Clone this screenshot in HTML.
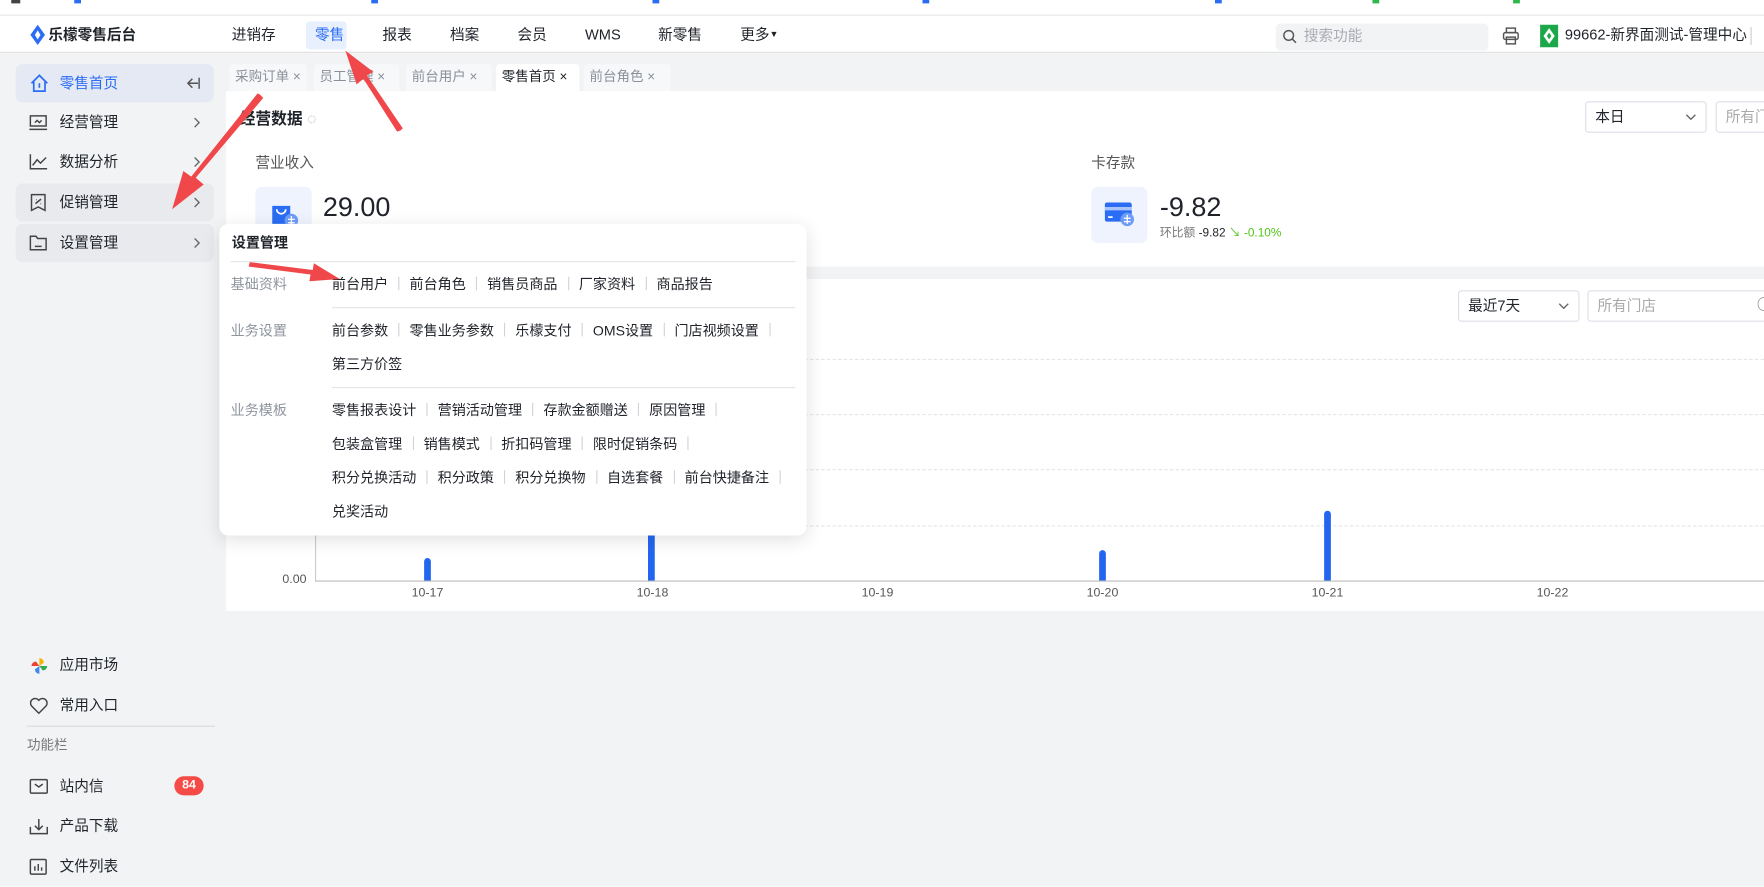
<!DOCTYPE html>
<html><head><meta charset="utf-8"><style>
*{box-sizing:border-box;margin:0;padding:0}
html,body{width:1764px;height:886px;overflow:hidden;background:#fff}
body{font-family:"Liberation Sans","Noto Sans CJK SC",sans-serif;color:#1f2329;line-height:1.15}
#root{position:absolute;left:0;top:0;width:1568px;height:788px;transform:scale(1.125);transform-origin:0 0;background:#f2f3f5;font-size:13px}
.a{position:absolute;white-space:nowrap}
.hdr{position:absolute;left:0;top:13px;width:1568px;height:34px;background:#fff;border-top:1px solid #e6e6e6;border-bottom:1px solid #e0e0e0}
.nav{position:absolute;top:10px;font-size:13px;color:#1f2329}
.side{position:absolute;left:14px;width:176px;height:34px;border-radius:6px}
.side .t{position:absolute;left:39px;top:10px;font-size:13px}
.side .ar{position:absolute;right:12px;top:12px}
.tab{position:absolute;top:57px;height:24px;background:#f7f8fa;color:#8a8f99;font-size:12px;padding:5px 5px;border-radius:3px 3px 0 0}
.card{position:absolute;background:#fff}
.pop .lb{position:absolute;left:10px;color:#8f959e;font-size:12.5px}
.pop .it{position:absolute;font-size:12.5px;color:#1f2329}
.sep{display:inline-block;width:1px;height:12px;background:#d0d3d8;margin:0 9px;vertical-align:-1px}
.grid{position:absolute;left:280px;width:1288px;border-top:1px dashed #e3e5e8}
.bar{position:absolute;width:6px;background:#2266f0;border-radius:3px 3px 0 0}
.xl{position:absolute;top:521px;font-size:11px;color:#555;transform:translateX(-50%)}
</style></head><body><div id="root">
<div class="a" style="left:0;top:0;width:1568px;height:13px;background:#fff"></div>
<div class="a" style="left:10px;top:0;width:8px;height:3px;background:#444"></div>
<div class="a" style="left:66px;top:0;width:6px;height:3px;background:#2a6df4"></div>
<div class="a" style="left:330px;top:0;width:6px;height:3px;background:#2a6df4"></div>
<div class="a" style="left:580px;top:0;width:6px;height:3px;background:#2a6df4"></div>
<div class="a" style="left:820px;top:0;width:6px;height:3px;background:#2a6df4"></div>
<div class="a" style="left:1080px;top:0;width:6px;height:3px;background:#2a6df4"></div>
<div class="a" style="left:1220px;top:0;width:6px;height:3px;background:#2fb84a"></div>
<div class="a" style="left:1345px;top:0;width:6px;height:3px;background:#2fb84a"></div>
<div class="hdr">
 <svg class="a" style="left:27px;top:8px" width="13" height="18" viewBox="0 0 13 18"><path d="M6.5 0 L13 9 L6.5 18 L0 9Z" fill="#2a6df4"/><path d="M6.5 5 L9 9 L6.5 13 L4 9Z" fill="#fff"/></svg>
 <div class="a" style="left:43px;top:10px;font-weight:bold;font-size:13px">乐檬零售后台</div>
 <div class="nav" style="left:206px">进销存</div>
 <div class="a" style="left:272px;top:5px;width:36px;height:25px;background:#e8effd;border-radius:3px"></div>
 <div class="nav" style="left:280px;color:#2a6df4">零售</div>
 <div class="nav" style="left:340px">报表</div>
 <div class="nav" style="left:400px">档案</div>
 <div class="nav" style="left:460px">会员</div>
 <div class="nav" style="left:520px">WMS</div>
 <div class="nav" style="left:585px">新零售</div>
 <div class="nav" style="left:658px">更多<span style="font-size:8px;vertical-align:2px">▼</span></div>
 <div class="a" style="left:1134px;top:7px;width:189px;height:24px;background:#f2f3f5;border-radius:4px"></div>
 <svg class="a" style="left:1140px;top:12px" width="13" height="13" viewBox="0 0 13 13"><circle cx="5.5" cy="5.5" r="4.3" fill="none" stroke="#555" stroke-width="1.3"/><path d="M8.6 8.6L12 12" stroke="#555" stroke-width="1.3"/></svg>
 <div class="a" style="left:1159px;top:11px;color:#a8abb2;font-size:13px">搜索功能</div>
 <svg class="a" style="left:1335px;top:10px" width="16" height="16" viewBox="0 0 16 16" fill="none" stroke="#555" stroke-width="1.3"><rect x="4" y="1" width="8" height="4"/><rect x="1.5" y="5" width="13" height="6" rx="1.5"/><rect x="4" y="9" width="8" height="6"/></svg>
 <div class="a" style="left:1369px;top:8px;width:16px;height:20px;background:#1aa84b"></div>
 <svg class="a" style="left:1372px;top:11px" width="10" height="14" viewBox="0 0 10 14"><path d="M5 0L10 7L5 14L0 7Z" fill="#fff"/><path d="M5 4L7 7L5 10L3 7Z" fill="#1aa84b"/></svg>
 <div class="a" style="left:1391px;top:10px;font-size:13px">99662-新界面测试-管理中心</div>
 <div class="a" style="left:1556px;top:10px;width:1px;height:16px;background:#ccc"></div>
</div>
<div class="side" style="top:57px;background:#e4e9f3"><svg class="a" style="left:12px;top:8px" width="18" height="18" viewBox="0 0 18 18" fill="none" stroke="#2a6df4" stroke-width="1.5"><path d="M2 9L9 2L16 9M4 7.5V16H14V7.5"/><path d="M9 9v4"/></svg><div class="t" style="color:#2a6df4">零售首页</div><svg class="a" style="right:12px;top:12px" width="12" height="10" viewBox="0 0 12 10" fill="none" stroke="#555" stroke-width="1.3"><path d="M11 0v10M10 5H1M5 1L1 5l4 4"/></svg></div>
<div class="side" style="top:92px"><svg class="a" style="left:12px;top:10px" width="16" height="14" viewBox="0 0 16 14" fill="none" stroke="#444" stroke-width="1.3"><rect x="1" y="1" width="14" height="9"/><path d="M0 13h16M5 7l2-2 2 2 2-2"/></svg><div class="t">经营管理</div><svg class="ar" width="6" height="10"><path d="M1 1l4 4-4 4" fill="none" stroke="#666" stroke-width="1.2"/></svg></div>
<div class="side" style="top:127px"><svg class="a" style="left:12px;top:10px" width="16" height="14" viewBox="0 0 16 14" fill="none" stroke="#444" stroke-width="1.3"><path d="M1 0v13h15M3 10l4-5 3 3 5-5"/></svg><div class="t">数据分析</div><svg class="ar" width="6" height="10"><path d="M1 1l4 4-4 4" fill="none" stroke="#666" stroke-width="1.2"/></svg></div>
<div class="side" style="top:163px;background:#e9eaed"><svg class="a" style="left:13px;top:9px" width="14" height="16" viewBox="0 0 14 16" fill="none" stroke="#444" stroke-width="1.3"><path d="M1 1h12v14l-6-3-6 3z"/><path d="M4.5 9l5-4M5 5.5h.5M9 9h.5"/></svg><div class="t">促销管理</div><svg class="ar" width="6" height="10"><path d="M1 1l4 4-4 4" fill="none" stroke="#666" stroke-width="1.2"/></svg></div>
<div class="side" style="top:199px;background:#e9eaed"><svg class="a" style="left:12px;top:10px" width="16" height="14" viewBox="0 0 16 14" fill="none" stroke="#444" stroke-width="1.3"><path d="M1 1h5l1.5 2H15v10H1z"/><path d="M5 10h6"/></svg><div class="t">设置管理</div><svg class="ar" width="6" height="10"><path d="M1 1l4 4-4 4" fill="none" stroke="#666" stroke-width="1.2"/></svg></div>
<svg class="a" style="left:27px;top:584px" width="16" height="16" viewBox="0 0 16 16"><path d="M8 8V1a4 4 0 0 1 4 4z" fill="#f4b400"/><path d="M8 8h7a4 4 0 0 1-4 4z" fill="#34a853"/><path d="M8 8v7a4 4 0 0 1-4-4z" fill="#4285f4"/><path d="M8 8H1a4 4 0 0 1 4-4z" fill="#ea4335"/></svg>
<div class="a" style="left:53px;top:584px">应用市场</div>
<svg class="a" style="left:26px;top:620px" width="17" height="15" viewBox="0 0 17 15"><path d="M8.5 14L2 7.5A3.6 3.6 0 0 1 8.5 2.5 3.6 3.6 0 0 1 15 7.5Z" fill="none" stroke="#444" stroke-width="1.3"/></svg>
<div class="a" style="left:53px;top:620px">常用入口</div>
<div class="a" style="left:24px;top:645px;width:167px;height:1px;background:#d8dadd"></div>
<div class="a" style="left:24px;top:656px;color:#777;font-size:12px">功能栏</div>
<svg class="a" style="left:26px;top:692px" width="17" height="14" viewBox="0 0 17 14" fill="none" stroke="#444" stroke-width="1.3"><rect x="1" y="1" width="15" height="12" rx="1"/><path d="M5 5l3.5 2.5L12 5"/></svg>
<div class="a" style="left:53px;top:692px">站内信</div>
<div class="a" style="left:155px;top:690px;width:26px;height:17px;border-radius:9px;background:#f54a45;color:#fff;font-size:11px;font-weight:bold;text-align:center;line-height:17px">84</div>
<svg class="a" style="left:26px;top:727px" width="17" height="15" viewBox="0 0 17 15" fill="none" stroke="#444" stroke-width="1.3"><path d="M1 8v6h15V8M8.5 1v9M5 7l3.5 3.5L12 7"/></svg>
<div class="a" style="left:53px;top:727px">产品下载</div>
<svg class="a" style="left:26px;top:763px" width="16" height="15" viewBox="0 0 16 15" fill="none" stroke="#444" stroke-width="1.3"><rect x="1" y="1" width="14" height="13" rx="1"/><path d="M5 11V7M8 11V5M11 11V8"/></svg>
<div class="a" style="left:53px;top:763px">文件列表</div>
<div class="tab" style="left:204px;width:69px">采购订单 ×</div>
<div class="tab" style="left:279px;width:76px">员工管理 ×</div>
<div class="tab" style="left:361px;width:76px">前台用户 ×</div>
<div class="tab" style="left:441px;width:74px;background:#fff;color:#1f2329">零售首页 ×</div>
<div class="tab" style="left:519px;width:77px">前台角色 ×</div>
<div class="card" style="left:201px;top:81px;width:1367px;height:156px"></div>
<div class="a" style="left:213px;top:97px;font-size:14px;font-weight:bold">经营数据 <span style="color:#aaa;font-weight:normal">◌</span></div>
<div class="a" style="left:1409px;top:90px;width:108px;height:28px;border:1px solid #dcdfe6;border-radius:3px;background:#fff"><span class="a" style="left:8px;top:6px">本日</span><svg class="a" style="left:88px;top:10px" width="10" height="7"><path d="M1 1l4 4 4-4" fill="none" stroke="#666" stroke-width="1.2"/></svg></div>
<div class="a" style="left:1525px;top:90px;width:60px;height:28px;border:1px solid #dcdfe6;border-radius:3px;background:#fff;color:#aaa;padding:6px 8px">所有门</div>
<div class="a" style="left:227px;top:138px;color:#555">营业收入</div>
<div class="a" style="left:227px;top:166px;width:50px;height:50px;background:#eef3fd;border-radius:6px"></div>
<svg class="a" style="left:240px;top:180px" width="26" height="24" viewBox="0 0 26 24"><path d="M2 3h16v18H2z" fill="#2a6df4"/><path d="M6 6a4 4 0 0 0 8 0" fill="none" stroke="#fff" stroke-width="1.5"/><circle cx="19" cy="16" r="6" fill="#6d9cf7"/><path d="M19 12v8M16 15h6M16 18h6" stroke="#fff" stroke-width="1.2"/></svg>
<div class="a" style="left:287px;top:171px;font-size:24px">29.00</div>
<div class="a" style="left:970px;top:138px;color:#555">卡存款</div>
<div class="a" style="left:970px;top:166px;width:50px;height:50px;background:#eef3fd;border-radius:6px"></div>
<svg class="a" style="left:982px;top:180px" width="28" height="22" viewBox="0 0 28 22"><rect x="0" y="0" width="24" height="17" rx="2" fill="#2a6df4"/><rect x="0" y="4" width="24" height="3" fill="#fff" opacity=".6"/><path d="M3 13h4" stroke="#fff" stroke-width="1.5"/><circle cx="20" cy="15" r="6" fill="#6d9cf7"/><path d="M20 11v8M17 14h6M17 17h6" stroke="#fff" stroke-width="1.2"/></svg>
<div class="a" style="left:1031px;top:171px;font-size:24px">-9.82</div>
<div class="a" style="left:1031px;top:201px;font-size:10.5px;color:#777">环比额 <span style="color:#1f2329">-9.82</span> <span style="color:#52c41a">↘ -0.10%</span></div>
<div class="card" style="left:201px;top:248px;width:1367px;height:295px"></div>
<div class="a" style="left:1296px;top:258px;width:108px;height:28px;border:1px solid #dcdfe6;border-radius:3px;background:#fff"><span class="a" style="left:8px;top:6px">最近7天</span><svg class="a" style="left:88px;top:10px" width="10" height="7"><path d="M1 1l4 4 4-4" fill="none" stroke="#666" stroke-width="1.2"/></svg></div>
<div class="a" style="left:1411px;top:258px;width:170px;height:28px;border:1px solid #dcdfe6;border-radius:3px;background:#fff;color:#aaa;padding:6px 8px">所有门店<span class="a" style="left:150px;top:5px;color:#555">◯</span></div>
<div class="grid" style="top:319px"></div><div class="grid" style="top:368px"></div><div class="grid" style="top:417px"></div><div class="grid" style="top:467px"></div>
<div class="a" style="left:280px;top:516px;width:1288px;height:1px;background:#bbb"></div>
<div class="a" style="left:280px;top:300px;width:1px;height:216px;background:#ccc"></div>
<div class="a" style="left:251px;top:509px;font-size:11px;color:#555">0.00</div>
<div class="bar" style="left:377px;top:496px;height:20px"></div>
<div class="bar" style="left:576px;top:440px;height:76px"></div>
<div class="bar" style="left:977px;top:489px;height:27px"></div>
<div class="bar" style="left:1177px;top:454px;height:62px"></div>
<div class="xl" style="left:380px">10-17</div><div class="xl" style="left:580px">10-18</div><div class="xl" style="left:780px">10-19</div><div class="xl" style="left:980px">10-20</div><div class="xl" style="left:1180px">10-21</div><div class="xl" style="left:1380px">10-22</div>
<div class="a pop" style="left:195px;top:199px;width:522px;height:277px;background:#fff;border-radius:8px;box-shadow:0 4px 16px rgba(0,0,0,.12)">
 <div class="a" style="left:11px;top:10px;font-weight:bold;font-size:12.5px">设置管理</div>
 <div class="a" style="left:10px;top:33px;width:502px;height:1px;background:#e3e5e8"></div>
 <div class="lb" style="top:47px">基础资料</div>
 <div class="it" style="left:100px;top:47px">前台用户<span class="sep"></span>前台角色<span class="sep"></span>销售员商品<span class="sep"></span>厂家资料<span class="sep"></span>商品报告</div>
 <div class="a" style="left:100px;top:74px;width:412px;height:1px;background:#e3e5e8"></div>
 <div class="lb" style="top:88px">业务设置</div>
 <div class="it" style="left:100px;top:88px">前台参数<span class="sep"></span>零售业务参数<span class="sep"></span>乐檬支付<span class="sep"></span>OMS设置<span class="sep"></span>门店视频设置<span class="sep"></span></div>
 <div class="it" style="left:100px;top:118px">第三方价签</div>
 <div class="a" style="left:100px;top:145px;width:412px;height:1px;background:#e3e5e8"></div>
 <div class="lb" style="top:159px">业务模板</div>
 <div class="it" style="left:100px;top:159px">零售报表设计<span class="sep"></span>营销活动管理<span class="sep"></span>存款金额赠送<span class="sep"></span>原因管理<span class="sep"></span></div>
 <div class="it" style="left:100px;top:189px">包装盒管理<span class="sep"></span>销售模式<span class="sep"></span>折扣码管理<span class="sep"></span>限时促销条码<span class="sep"></span></div>
 <div class="it" style="left:100px;top:219px">积分兑换活动<span class="sep"></span>积分政策<span class="sep"></span>积分兑换物<span class="sep"></span>自选套餐<span class="sep"></span>前台快捷备注<span class="sep"></span></div>
 <div class="it" style="left:100px;top:249px">兑奖活动</div>
</div>
<svg class="a" style="left:0;top:0" width="1568" height="788">
 <g fill="#f0484a">
  <path d="M356 116 L353 117 L323 70 L317 75 L307 45 L332 64 L326 67 L358 114Z"/>
  <path d="M231 84 L234 87 L174 158 L181 164 L153 186 L163 152 L170 157 L229 83Z"/>
  <path d="M222 233 L221 237 L276 244 L275 250 L302 248 L279 234 L278 240Z"/>
 </g>
</svg>
</div></body></html>
